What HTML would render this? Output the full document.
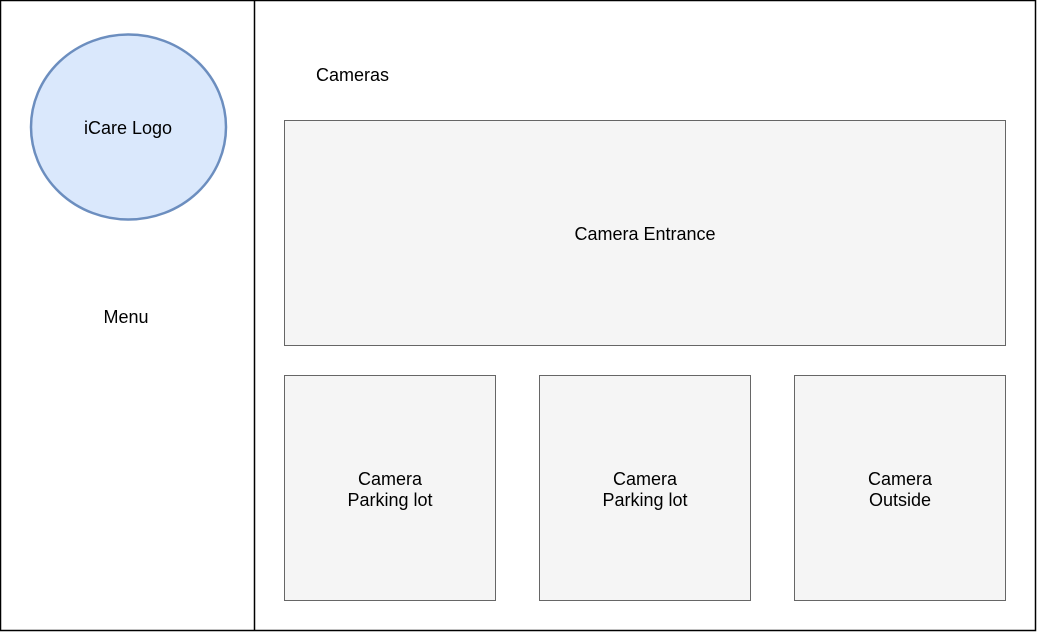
<!DOCTYPE html>
<html><head><style>
html,body{margin:0;padding:0;background:#fff;}
svg{display:block;}
text{font-family:"Liberation Sans",Arial,sans-serif;font-size:18px;fill:#000;}
</style></head><body>
<svg width="1037" height="632" viewBox="0 0 1037 632" xmlns="http://www.w3.org/2000/svg">
<rect x="0.5" y="0.5" width="1035" height="630" fill="#fff" stroke="#000" stroke-width="1.5"/>
<line x1="254.5" y1="0" x2="254.5" y2="631" stroke="#000" stroke-width="1.5"/>
<ellipse cx="128.5" cy="127" rx="97.5" ry="92.5" fill="#dae8fc" stroke="#6c8ebf" stroke-width="2.5"/>
<text x="128" y="134" text-anchor="middle">iCare Logo</text>
<text x="126" y="323" text-anchor="middle">Menu</text>
<text x="316" y="81">Cameras</text>
<rect x="284.5" y="120.5" width="721" height="225" fill="#f5f5f5" stroke="#666"/>
<text x="645" y="240" text-anchor="middle">Camera Entrance</text>
<rect x="284.5" y="375.5" width="211" height="225" fill="#f5f5f5" stroke="#666"/>
<rect x="539.5" y="375.5" width="211" height="225" fill="#f5f5f5" stroke="#666"/>
<rect x="794.5" y="375.5" width="211" height="225" fill="#f5f5f5" stroke="#666"/>
<text x="390" y="485" text-anchor="middle">Camera</text>
<text x="390" y="506" text-anchor="middle">Parking lot</text>
<text x="645" y="485" text-anchor="middle">Camera</text>
<text x="645" y="506" text-anchor="middle">Parking lot</text>
<text x="900" y="485" text-anchor="middle">Camera</text>
<text x="900" y="506" text-anchor="middle">Outside</text>
</svg>
</body></html>
